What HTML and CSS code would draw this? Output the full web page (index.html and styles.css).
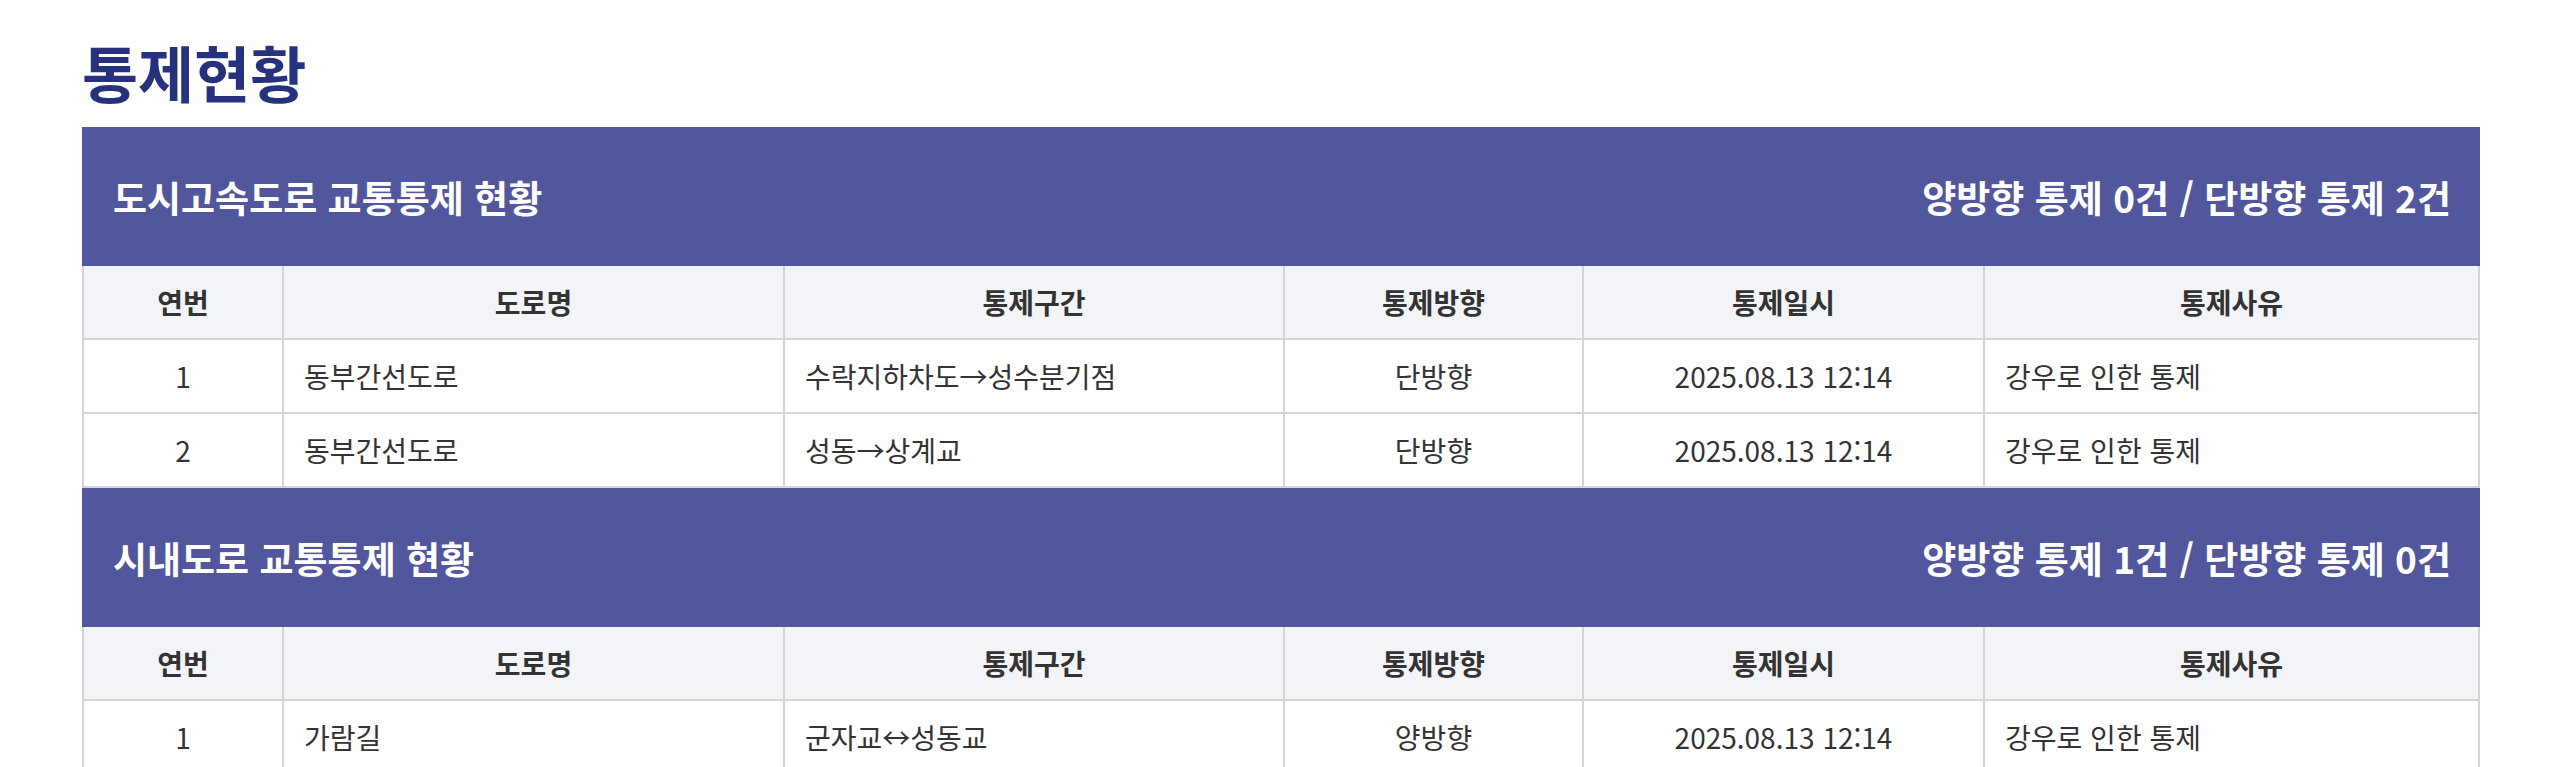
FILE: index.html
```html
<!DOCTYPE html>
<html lang="ko">
<head>
<meta charset="utf-8">
<title>통제현황</title>
<link rel="stylesheet" href="styles.css">
</head>
<body>
<div class="wrap">
  <h1 class="page-title">통제현황</h1>

  <section class="block">
    <div class="band">
      <span class="band-title">도시고속도로 교통통제 현황</span>
      <span class="band-sum">양방향 통제 0건 / 단방향 통제 2건</span>
    </div>
    <table class="grid">
      <colgroup>
        <col class="c1"><col class="c2"><col class="c3"><col class="c4"><col class="c5"><col class="c6">
      </colgroup>
      <thead>
        <tr><th>연번</th><th>도로명</th><th>통제구간</th><th>통제방향</th><th>통제일시</th><th>통제사유</th></tr>
      </thead>
      <tbody>
        <tr><td class="ctr">1</td><td>동부간선도로</td><td>수락지하차도→성수분기점</td><td class="ctr">단방향</td><td class="ctr">2025.08.13 12:14</td><td>강우로 인한 통제</td></tr>
        <tr><td class="ctr">2</td><td>동부간선도로</td><td>성동→상계교</td><td class="ctr">단방향</td><td class="ctr">2025.08.13 12:14</td><td>강우로 인한 통제</td></tr>
      </tbody>
    </table>
  </section>

  <section class="block">
    <div class="band">
      <span class="band-title">시내도로 교통통제 현황</span>
      <span class="band-sum">양방향 통제 1건 / 단방향 통제 0건</span>
    </div>
    <table class="grid">
      <colgroup>
        <col class="c1"><col class="c2"><col class="c3"><col class="c4"><col class="c5"><col class="c6">
      </colgroup>
      <thead>
        <tr><th>연번</th><th>도로명</th><th>통제구간</th><th>통제방향</th><th>통제일시</th><th>통제사유</th></tr>
      </thead>
      <tbody>
        <tr><td class="ctr">1</td><td>가람길</td><td>군자교↔성동교</td><td class="ctr">양방향</td><td class="ctr">2025.08.13 12:14</td><td>강우로 인한 통제</td></tr>
      </tbody>
    </table>
  </section>
</div>
</body>
</html>
```

FILE: styles.css
```css
html, body {
  margin: 0;
  padding: 0;
  background: #ffffff;
}
body {
  font-family: "Noto Sans CJK KR", "Noto Sans", sans-serif;
  color: #333333;
}
.wrap {
  padding: 0 77px 0 82px;
}
.page-title {
  margin: 0;
  padding-top: 36px;
  height: 91px;
  font-size: 61px;
  line-height: 72px;
  font-weight: 700;
  color: #27327e;
}
.band {
  height: 139px;
  box-sizing: border-box;
  padding: 0 29px 0 31px;
  background: #52569c;
  color: #ffffff;
  display: flex;
  align-items: center;
  justify-content: space-between;
  font-size: 37px;
  font-weight: 700;
}
.grid {
  width: 100%;
  border-collapse: collapse;
  table-layout: fixed;
  font-size: 28px;
}
.c1 { width: 200px; }
.c2 { width: 501px; }
.c3 { width: 500px; }
.c4 { width: 299px; }
.c5 { width: 401px; }
.grid th, .grid td {
  border-left: 2px solid #d4d4d4;
  border-right: 2px solid #d4d4d4;
  border-bottom: 2px solid #d4d4d4;
  padding: 0 20px;
  white-space: nowrap;
}
.grid th {
  height: 72px;
  background: #f3f4f8;
  font-weight: 700;
  color: #333333;
  text-align: center;
}
.grid td {
  height: 72px;
  font-weight: 400;
  color: #333333;
  text-align: left;
}
.grid td.ctr {
  text-align: center;
}
```
